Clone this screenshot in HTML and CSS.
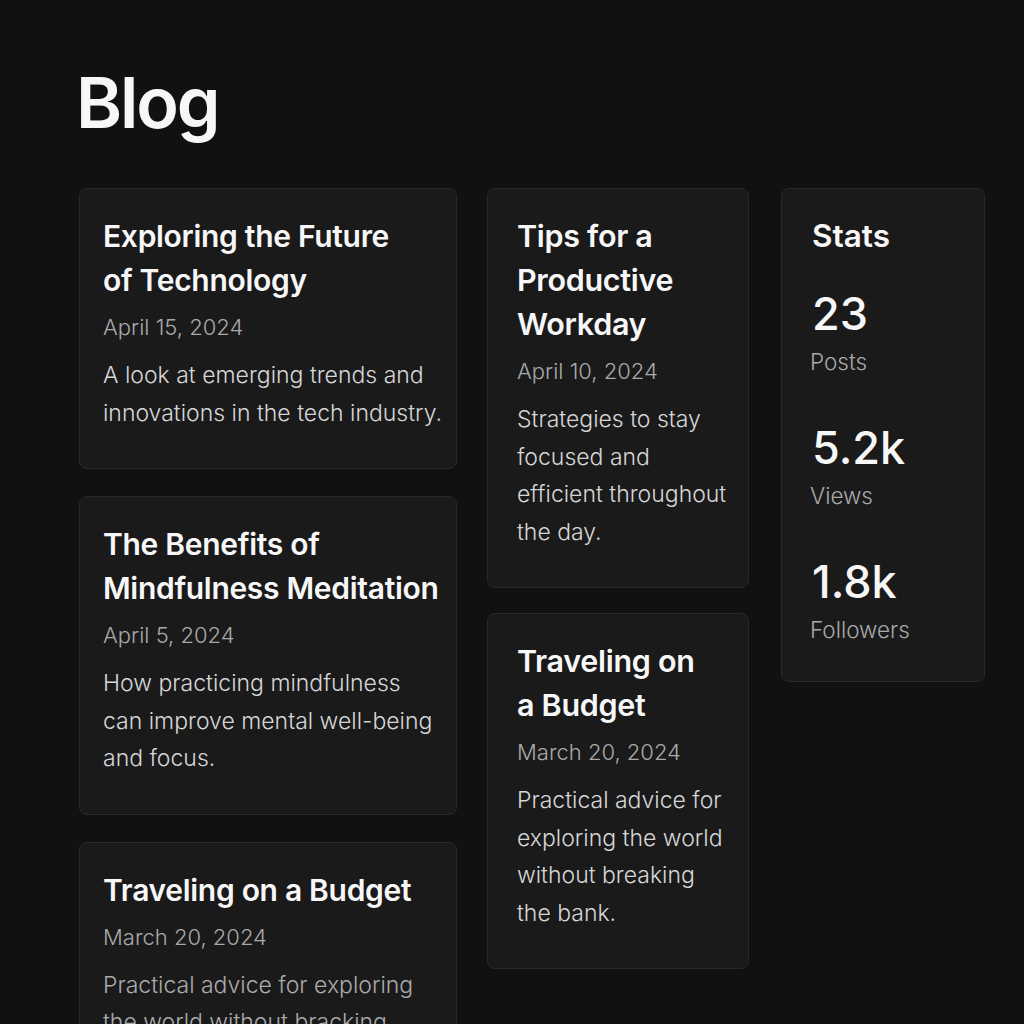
FILE: index.html
```html
<!DOCTYPE html>
<html lang="en">
<head>
<meta charset="utf-8">
<title>Blog</title>
<link rel="stylesheet" href="styles.css">
</head>
<body>
<main class="page">
  <h1 class="page-title">Blog</h1>
  <div class="layout">
    <div class="col col-wide">
      <article class="card">
        <h2 class="post-title">Exploring the Future<br>of Technology</h2>
        <p class="post-date">April 15, 2024</p>
        <p class="post-desc">A look at emerging trends and innovations in the tech industry.</p>
      </article>
      <article class="card">
        <h2 class="post-title">The Benefits of Mindfulness Meditation</h2>
        <p class="post-date">April 5, 2024</p>
        <p class="post-desc">How practicing mindfulness can improve mental well-being and focus.</p>
      </article>
      <article class="card">
        <h2 class="post-title">Traveling on a Budget</h2>
        <p class="post-date">March 20, 2024</p>
        <p class="post-desc faded">Practical advice for exploring the world without bracking the bank.</p>
      </article>
    </div>
    <div class="col col-mid">
      <article class="card">
        <h2 class="post-title">Tips for a Productive Workday</h2>
        <p class="post-date">April 10, 2024</p>
        <p class="post-desc">Strategies to stay focused and efficient throughout the day.</p>
      </article>
      <article class="card">
        <h2 class="post-title">Traveling on a Budget</h2>
        <p class="post-date">March 20, 2024</p>
        <p class="post-desc">Practical advice for exploring the world without breaking the bank.</p>
      </article>
    </div>
    <aside class="col col-side">
      <section class="card stats">
        <h2 class="stats-title">Stats</h2>
        <div class="stat">
          <div class="stat-value">23</div>
          <div class="stat-label">Posts</div>
        </div>
        <div class="stat">
          <div class="stat-value">5.2k</div>
          <div class="stat-label">Views</div>
        </div>
        <div class="stat">
          <div class="stat-value">1.8k</div>
          <div class="stat-label">Followers</div>
        </div>
      </section>
    </aside>
  </div>
</main>
</body>
</html>
```
FILE: styles.css
```css
* { box-sizing: border-box; }

html, body {
  margin: 0;
  padding: 0;
  height: 100%;
}

body {
  background: #111111;
  color: #f5f5f5;
  font-family: Inter, "Noto Sans", "Liberation Sans", sans-serif;
  overflow: hidden;
}

.page {
  padding: 58px 37px 0 76px;
}

.page-title {
  margin: 0 0 40px 0;
  font-size: 70px;
  line-height: 90px;
  font-weight: 600;
  letter-spacing: -0.03em;
  color: #f7f7f7;
}

.layout {
  display: grid;
  grid-template-columns: 378px 262px 206px;
  column-gap: 30px;
  align-items: start;
  margin-left: 3px;
}

.col {
  display: flex;
  flex-direction: column;
  gap: 27px;
}

.col-mid { gap: 25px; }
.col-side { margin-left: 2px; }

.card {
  background: #1a1a1b;
  border: 1px solid #29292a;
  border-radius: 8px;
  padding: 25px 12px 36px 23px;
}

.col-mid .card {
  padding: 25px 18px 36px 29px;
}

.post-title {
  margin: 0;
  font-size: 30px;
  line-height: 44px;
  font-weight: 600;
  letter-spacing: -0.01em;
  color: #f7f7f7;
}

.col-mid .post-title {
  font-size: 30.5px;
  max-width: 196px;
}

.post-date {
  margin: 10px 0 0 0;
  font-size: 22px;
  line-height: 30px;
  font-weight: 300;
  color: #a9a9a9;
}

.post-desc {
  margin: 15px 0 0 0;
  font-size: 23px;
  line-height: 37.5px;
  font-weight: 300;
  color: #d6d6d6;
}

.post-desc.faded {
  color: #aaaaaa;
  max-width: 318px;
}

.stats {
  padding: 25px 16px 36px 30px;
}

.stats-title {
  margin: 0 0 30px 0;
  font-size: 31.5px;
  line-height: 44px;
  font-weight: 600;
  color: #f7f7f7;
}

.stat + .stat { margin-top: 45px; }

.stat-value {
  font-size: 45px;
  line-height: 52px;
  font-weight: 500;
  color: #f7f7f7;
}

.stat-label {
  margin-top: 7px;
  font-size: 22.5px;
  line-height: 30px;
  font-weight: 300;
  color: #a9a9a9;
  margin-left: -2px;
}
```
